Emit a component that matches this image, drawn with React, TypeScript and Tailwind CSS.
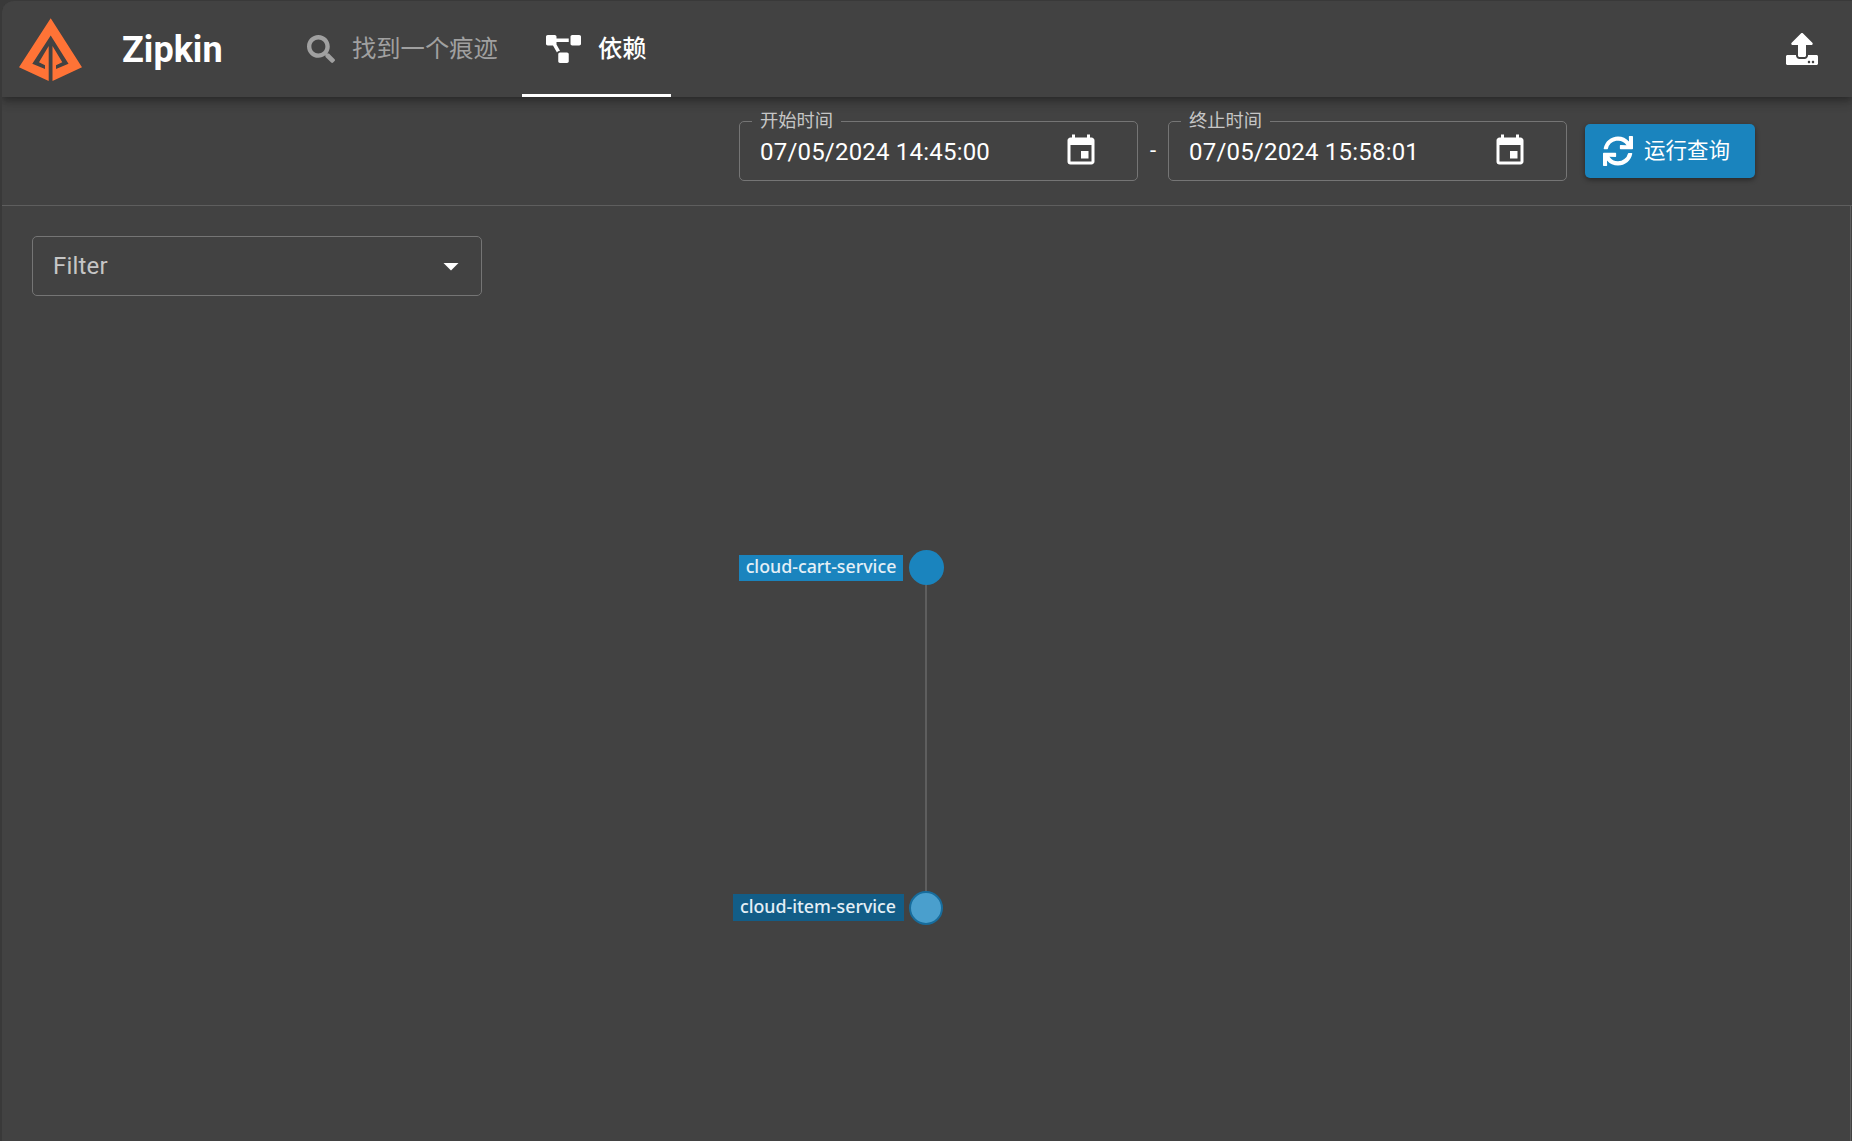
import React from "react";
import { FaSearch, FaProjectDiagram, FaSync, FaUpload } from "react-icons/fa";
import { MdEvent, MdArrowDropDown } from "react-icons/md";

function Logo() {
  return (
    <svg className="ml-[17px] h-[64px] w-[64px] shrink-0" viewBox="0 0 64 64" fill="#ff7336">
      <path d="M31.7 1.3 L63 50.2 L33.5 64 V29 L43.3 45.3 L37 48.3 V52 L49.5 46.7 L31.7 18.5 L13.3 46.7 L26 52 V48.3 L20 45.3 L29.7 29 V64 L0 50.2 Z" />
    </svg>
  );
}

function DateField({ label, value }: { label: string; value: string }) {
  return (
    <div className="relative flex h-[60px] w-[399px] items-center justify-between rounded-[5px] border border-[#757575] pr-[38px] pl-[20px]">
      <span className="absolute -top-[14px] left-[12px] bg-[#424242] px-[8px] text-[18.3px] leading-[26px] text-[#c6c6c6]">
        {label}
      </span>
      <span className="mt-[2px] text-[24px] tracking-[0.2px] text-white">{value}</span>
      <MdEvent className="-mt-px h-[36px] w-[36px] text-white" />
    </div>
  );
}

export default function App() {
  return (
    <div className="h-[1141px] w-[1852px] overflow-hidden bg-[#393939] pt-px pl-[2px] font-['Roboto','Noto_Sans_CJK_SC',sans-serif]">
      <div className="flex h-full flex-col overflow-hidden rounded-tl-[12px] bg-[#424242]">
        <header className="relative z-10 flex h-[96px] shrink-0 items-center bg-[#424242] shadow-[0_3px_6px_-1px_rgba(0,0,0,0.2),0_6px_8px_0_rgba(0,0,0,0.14),0_2px_15px_0_rgba(0,0,0,0.12)]">
          <Logo />
          <h1 className="mt-[2px] ml-[39px] w-[162px] text-[36px] font-bold text-white">Zipkin</h1>
          <nav className="flex h-full">
            <a className="flex w-[238px] items-center pl-[23px] text-[24.3px] text-[#a0a0a0]">
              <FaSearch className="h-[28px] w-[28px]" />
              <span className="ml-[17px]">找到一个痕迹</span>
            </a>
            <a className="flex w-[149px] items-center border-b-[3px] border-white pt-[3px] pl-[24px] text-[24.3px] font-medium text-white">
              <FaProjectDiagram className="h-[28px] w-[35px]" />
              <span className="ml-[17px]">依赖</span>
            </a>
          </nav>
          <FaUpload className="mr-[34px] ml-auto h-[32px] w-[32px] text-white" />
        </header>
        <section className="flex h-[109px] shrink-0 items-start border-b border-[#5e5e5e] pt-[24px] pl-[737px]">
          <DateField label="开始时间" value="07/05/2024 14:45:00" />
          <span className="mt-[15px] w-[30px] text-center text-[22px] leading-[30px] text-white">-</span>
          <DateField label="终止时间" value="07/05/2024 15:58:01" />
          <button className="mt-[3px] ml-[18px] flex h-[54px] w-[170px] items-center rounded-[5px] bg-[#1a84be] pl-[18px] text-[21.5px] text-white shadow-[0_2px_5px_rgba(0,0,0,0.4)]">
            <FaSync className="h-[30px] w-[30px]" />
            <span className="ml-[11px]">运行查询</span>
          </button>
        </section>
        <main className="relative mr-px grow border-r border-[#5e5e5e] pt-[30px] pl-[30px]">
          <div className="flex h-[60px] w-[450px] items-center justify-between rounded-[5px] border border-[#757575] pr-[12px] pl-[20px]">
            <span className="text-[24px] tracking-[0.2px] text-[#c6c6c6]">Filter</span>
            <MdArrowDropDown className="h-[36px] w-[36px] text-white" />
          </div>
          <div className="absolute top-[378px] left-[923px] h-[308px] w-[2px] bg-[#5e5e5e]" />
          <div className="absolute top-[344px] left-[906.5px] h-[35px] w-[35px] rounded-full bg-[#1a84be]" />
          <div className="absolute top-[685px] left-[907px] h-[34px] w-[34px] rounded-full border-2 border-[#176c9c] bg-[#4a9fcd]" />
          <span className="absolute top-[349px] left-[737px] h-[26px] w-[164px] bg-[#1a84be] text-center font-['Noto_Sans'] text-[17.8px] leading-[23px] font-medium whitespace-nowrap text-[#e4eff6]">
            cloud-cart-service
          </span>
          <span className="absolute top-[688px] left-[730.5px] h-[27px] w-[171px] bg-[#125d87] text-center font-['Noto_Sans'] text-[17.8px] leading-[24px] font-medium whitespace-nowrap text-[#e4eff6]">
            cloud-item-service
          </span>
        </main>
      </div>
    </div>
  );
}
